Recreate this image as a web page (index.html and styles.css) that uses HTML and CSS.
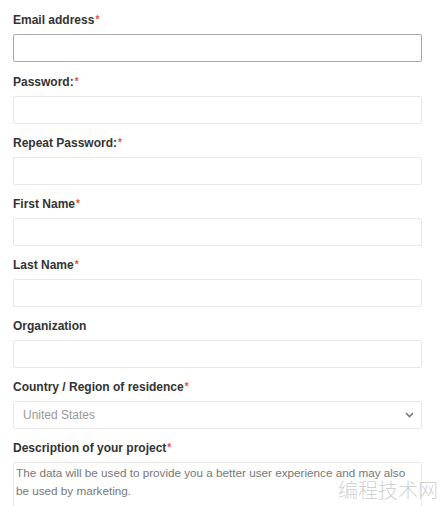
FILE: index.html
```html
<!DOCTYPE html>
<html lang="en">
<head>
    <meta charset="UTF-8">
    <title>Register</title>
    <link rel="stylesheet" href="styles.css">
</head>
<body>
<form class="reg-form">
    <div class="field">
        <label>Email address<span class="req">*</span></label>
        <input type="text" class="ipt ipt-focus">
    </div>
    <div class="field">
        <label>Password:<span class="req">*</span></label>
        <input type="password" class="ipt">
    </div>
    <div class="field">
        <label>Repeat Password:<span class="req">*</span></label>
        <input type="password" class="ipt">
    </div>
    <div class="field">
        <label>First Name<span class="req">*</span></label>
        <input type="text" class="ipt">
    </div>
    <div class="field">
        <label>Last Name<span class="req">*</span></label>
        <input type="text" class="ipt">
    </div>
    <div class="field">
        <label>Organization</label>
        <input type="text" class="ipt">
    </div>
    <div class="field">
        <label>Country / Region of residence<span class="req">*</span></label>
        <div class="select">
            <span>United States</span>
            <svg width="9" height="6" viewBox="0 0 9 6"><path d="M1 1l3.5 3.5L8 1" fill="none" stroke="#777" stroke-width="1.6"/></svg>
        </div>
    </div>
    <div class="field field-desc">
        <label>Description of your project<span class="req">*</span></label>
        <div class="textarea">The data will be used to provide you a better user experience and may also be used by marketing.</div>
    </div>
</form>
<div class="watermark">编程技术网</div>
</body>
</html>
```

FILE: styles.css
```css
* {
    margin: 0;
    padding: 0;
    box-sizing: border-box;
}

body {
    font-family: "Liberation Sans", Arial, sans-serif;
    background: #fff;
    overflow: hidden;
    height: 506px;
}

.reg-form {
    width: 422px;
    padding: 12px 0 0 13px;
}

.field {
    margin-bottom: 11px;
}

.field:nth-child(n+2) {
    padding-top: 1px;
    margin-bottom: 10px;
}

.field-desc {
    margin-top: 2px;
}

.field label {
    display: block;
    font-size: 12px;
    font-weight: bold;
    color: #333;
    line-height: 16px;
    margin-bottom: 6px;
}

.req {
    color: #e0533f;
    font-size: 10px;
    vertical-align: top;
    margin-left: 1px;
}

.ipt {
    display: block;
    width: 409px;
    height: 28px;
    border: 1px solid #e8e8e8;
    border-radius: 2px;
    outline: none;
    background: #fff;
}

.ipt-focus {
    border-color: #a8a8a8;
}

.select {
    width: 409px;
    height: 28px;
    border: 1px solid #e8e8e8;
    border-radius: 2px;
    display: flex;
    align-items: center;
    justify-content: space-between;
    padding: 0 7px 0 9px;
    font-size: 12px;
    color: #999;
}

.textarea {
    width: 409px;
    height: 60px;
    border: 1px solid #e8e8e8;
    border-radius: 2px;
    padding: 1px 0 0 2px;
    font-size: 11.7px;
    line-height: 18px;
    color: #777;
}

.watermark {
    position: absolute;
    left: 338px;
    top: 475px;
    font-family: "Noto Sans CJK SC", sans-serif;
    font-weight: 300;
    font-size: 20px;
    color: rgba(170, 170, 170, 0.55);
}
```
